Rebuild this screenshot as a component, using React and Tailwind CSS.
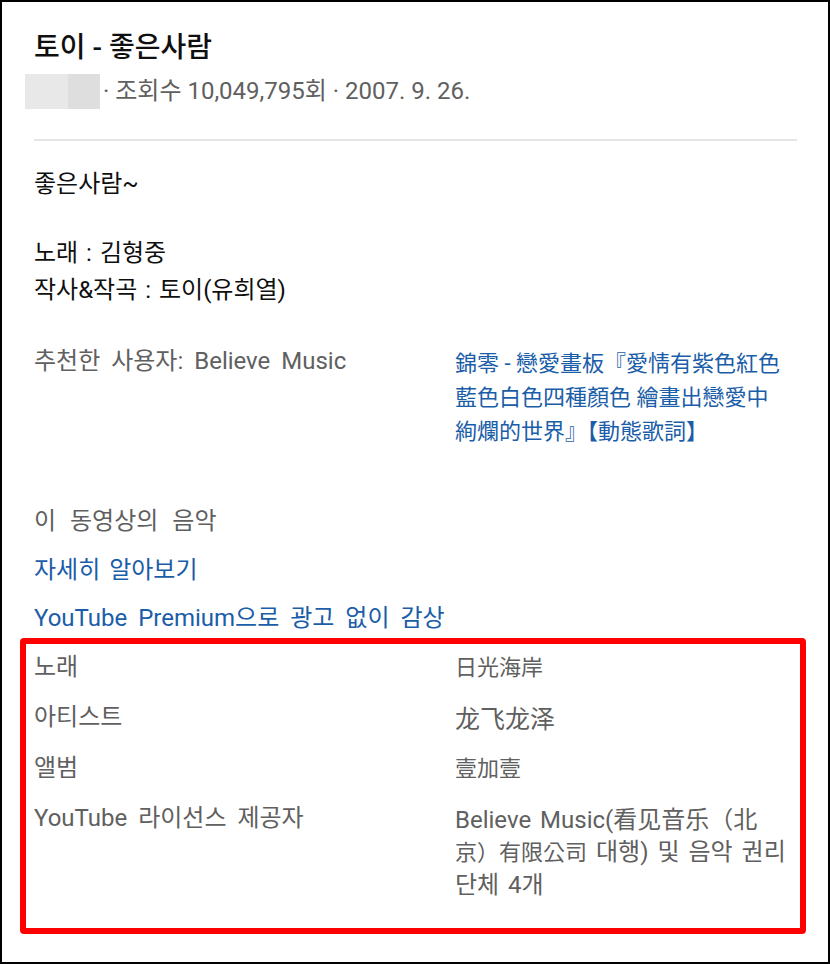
const font = { fontFamily: 'Roboto, "Noto Sans CJK KR", sans-serif' };

const rows = [
    { label: "노래", value: [<span className="text-[22px]">日光海岸</span>], pad: "pt-[2px]" },
    { label: "아티스트", value: [<span className="text-[25px]">龙飞龙泽</span>], pad: "pt-[5px]" },
    { label: "앨범", value: [<span className="text-[22px]">壹加壹</span>], pad: "pt-[2px]" },
    {
        label: "YouTube 라이선스 제공자",
        value: [
            <span>Believe Music(看见音乐（北</span>,
            <span><span className="text-[22px]">京）有限公司</span> 대행) 및 음악 권리</span>,
            <span>단체 4개</span>,
        ],
        pad: "pt-[4px]",
    },
];

const App = () => {
    return (
        <div className="w-[830px] h-[964px] border-2 border-black bg-white overflow-hidden" style={font}>
            <div className="pl-[32px] pr-[31px] pt-[28px]">
                <h1 className="text-[28px] leading-[36px] font-medium text-[#0f0f0f]">토이 - 좋은사람</h1>

                <div className="mt-[7px] h-[36px] ml-[-9px] flex items-center text-[24px] text-[#606060]">
                    <div className="flex h-[35px]">
                        <div className="w-[43px] bg-[#e8e8e8]"></div>
                        <div className="w-[32px] bg-[#dedede]"></div>
                    </div>
                    <span className="ml-[3px]">· 조회수 10,049,795회 · 2007. 9. 26.</span>
                </div>

                <div className="mt-[30px] h-[2px] bg-[#e5e5e5]"></div>

                <p className="mt-[25px] text-[24px] leading-[37px] text-[#0f0f0f]">좋은사람~</p>

                <div className="mt-[32px] text-[24px] leading-[37px] text-[#0f0f0f] [word-spacing:2px]">
                    <p>노래 : 김형중</p>
                    <p>작사&작곡 : 토이(유희열)</p>
                </div>

                <div className="mt-[34px] flex">
                    <div className="w-[421px] text-[24px] leading-[37px] text-[#606060] [word-spacing:5px]">추천한 사용자: Believe Music</div>
                    <div className="flex-1 text-[22px] leading-[34px] pt-[4px] text-[#1a5da8]">
                        錦零 - 戀愛畫板『愛情有紫色紅色<br />
                        藍色白色四種顏色 繪畫出戀愛中<br />
                        絢爛的世界』【動態歌詞】
                    </div>
                </div>

                <div className="text-[24px] leading-[37px] [word-spacing:5px]">
                    <p className="mt-[54px] text-[#606060] [word-spacing:8px]">이 동영상의 음악</p>
                    <p className="mt-[12px] text-[#1a5da8] [word-spacing:3px]">자세히 알아보기</p>
                    <p className="mt-[11px] text-[#1a5da8]">YouTube Premium으로 광고 없이 감상</p>
                </div>
            </div>

            <div className="ml-[18px] mt-[1px] w-[786px] h-[296px] border-[6px] border-[#ff0000] rounded-[4px] pl-[8px] pt-[5px] text-[24px] text-[#606060]">
                {rows.map((row) => (
                    <div key={row.label} className="flex mb-[14px]">
                        <div className="w-[421px] leading-[36px] [word-spacing:5px]">{row.label}</div>
                        <div className={"flex-1 leading-[32px] [word-spacing:3px] " + row.pad}>
                            {row.value.map((line, i) => (
                                <div key={i}>{line}</div>
                            ))}
                        </div>
                    </div>
                ))}
            </div>
        </div>
    );
};

export default App;
